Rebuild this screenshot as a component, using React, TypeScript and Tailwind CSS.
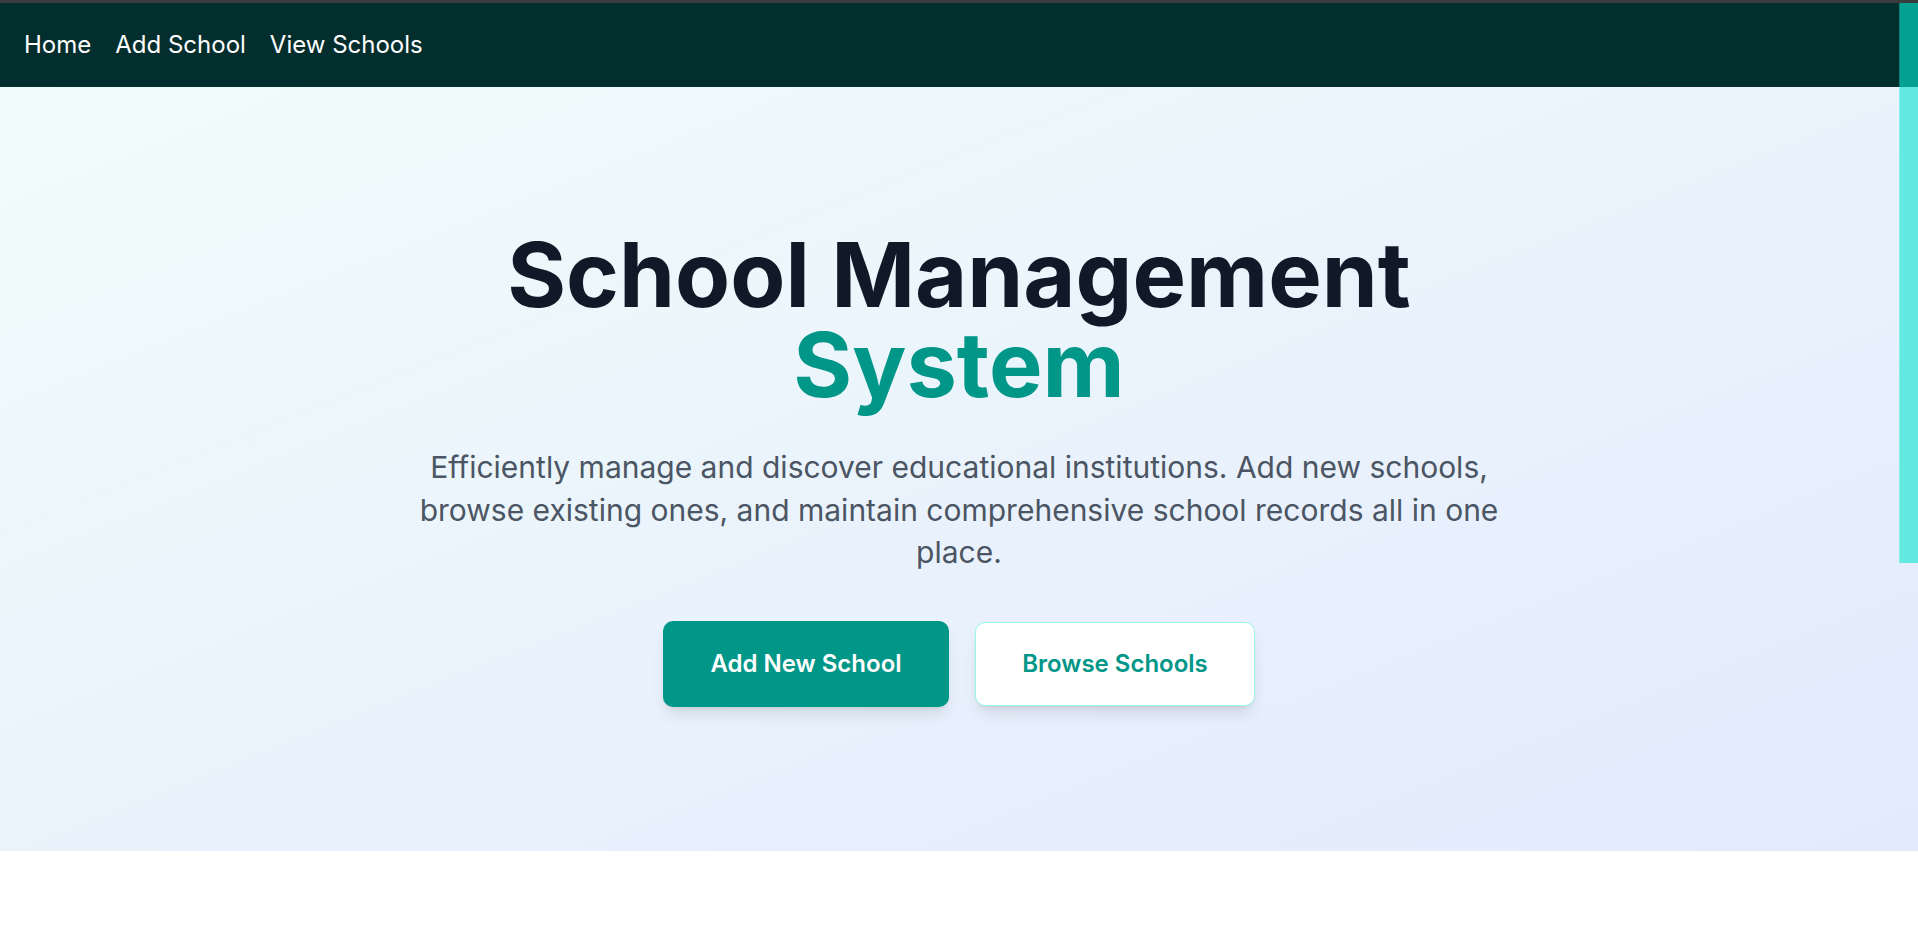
import React from "react";

export default function App() {
  return (
    <div className="relative min-h-[939px] bg-white font-['Inter','Noto_Sans',sans-serif]">
      <div className="h-[3px] bg-[#3a3b3d]" />
      <nav className="h-[84px] bg-[#032e2e] flex items-center gap-[24px] px-[24px] text-white text-[24px] leading-none">
        <a className="cursor-pointer">Home</a>
        <a className="cursor-pointer">Add School</a>
        <a className="cursor-pointer">View Schools</a>
      </nav>
      <section className="bg-gradient-to-br from-[#f0fdfa] via-[#eaf3fc] to-[#e2eafd] pt-[143px] pb-[144px] flex flex-col items-center text-center">
        <h1 className="text-[90px] leading-[90px] font-bold text-[#111827] mb-[36px]">
          <span className="block">School Management</span>
          <span className="block text-[#009688]">System</span>
        </h1>
        <p className="max-w-[1120px] text-[30px] leading-[42.5px] text-[#4b5563] mb-[47px]">
          Efficiently manage and discover educational institutions. Add new schools, browse existing ones, and maintain comprehensive school records all in one place.
        </p>
        <div className="flex items-center justify-center gap-[26px]">
          <button className="w-[286px] h-[86px] rounded-[10px] bg-[#009688] text-white text-[24px] font-semibold shadow-[0_10px_15px_-3px_rgba(0,0,0,0.1),0_4px_6px_-4px_rgba(0,0,0,0.1)]">
            Add New School
          </button>
          <button className="w-[280px] h-[84px] rounded-[10px] bg-white border border-[#99f6e4] text-[#009688] text-[24px] font-semibold shadow-[0_10px_15px_-3px_rgba(0,0,0,0.1),0_4px_6px_-4px_rgba(0,0,0,0.1)]">
            Browse Schools
          </button>
        </div>
      </section>
      <div className="absolute right-0 top-[3px] w-[19px] flex flex-col">
        <div className="h-[84px] bg-[#05a094] border-l border-[#0b8077]" />
        <div className="h-[476px] bg-[#62e9e2] border-l border-[#8cefe9]" />
      </div>
    </div>
  );
}
